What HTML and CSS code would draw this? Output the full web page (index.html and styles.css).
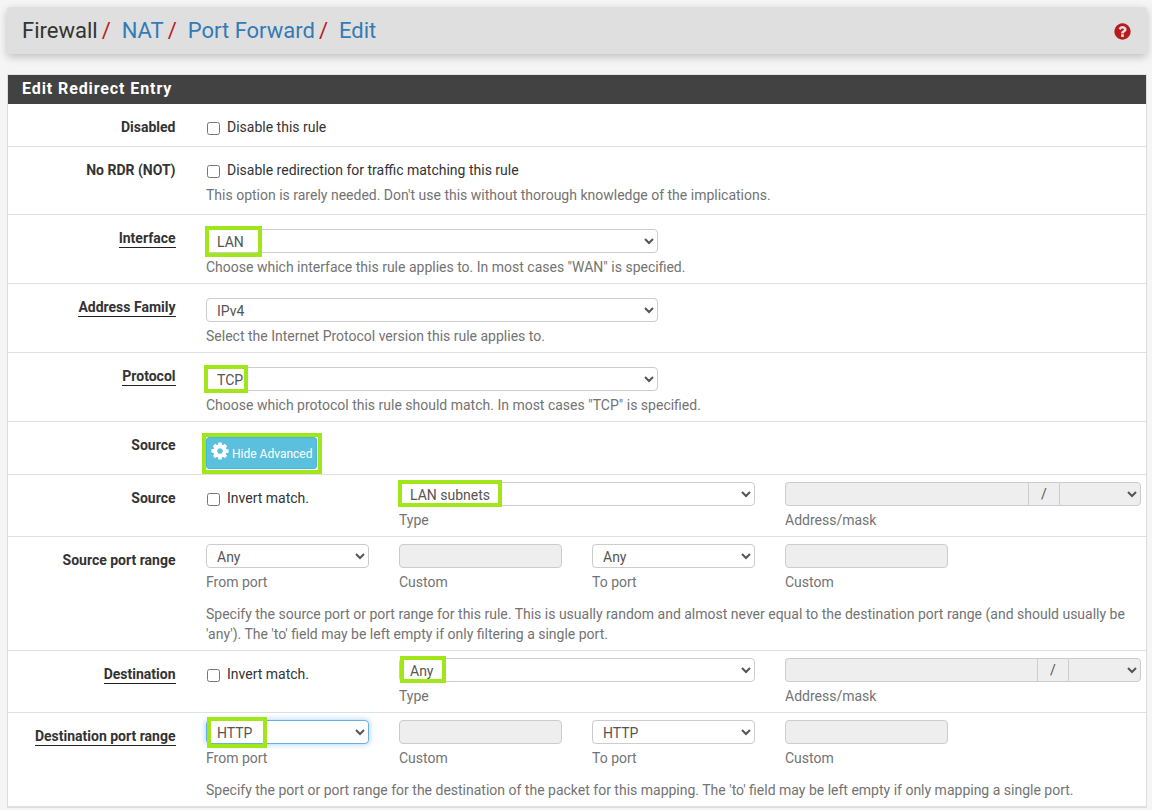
FILE: index.html

```html
<!DOCTYPE html>
<html lang="en">
<head>
<meta charset="UTF-8">
<meta name="viewport" content="width=device-width, initial-scale=1.0">
<title>Firewall: NAT: Port Forward: Edit</title>
<link rel="stylesheet" href="styles.css">
</head>
<body>

<header class="crumbs">
  <h1>
    <span>Firewall</span><i>/</i>
    <a href="#">NAT</a><i>/</i>
    <a href="#">Port Forward</a><i>/</i>
    <a href="#">Edit</a>
  </h1>
  <a href="#" class="help-link">
    <svg viewBox="0 0 1792 1792" width="19" height="19"><path d="M1024 1376v-192q0-14-9-23t-23-9h-192q-14 0-23 9t-9 23v192q0 14 9 23t23 9h192q14 0 23-9t9-23zm256-672q0-88-55.5-163t-138.5-116-170-41q-243 0-371 213-15 24 8 42l132 100q7 6 19 6 16 0 25-12 53-68 86-92 34-24 86-24 48 0 85.5 26t37.5 59q0 38-20 61t-68 45q-63 28-115.5 86.5t-52.5 125.5v36q0 14 9 23t23 9h192q14 0 23-9t9-23q0-19 21.5-49.5t54.5-49.5q32-18 49-28.5t46-35 44.5-48 28-60.5 12.5-81zm384 192q0 209-103 385.5t-279.5 279.5-385.5 103-385.5-103-279.5-279.5-103-385.5 103-385.5 279.5-279.5 385.5-103 385.5 103 279.5 279.5 103 385.5z"/></svg>
  </a>
</header>

<form class="panel">
  <h2>Edit Redirect Entry</h2>

  <!-- Basic options -->
  <div class="row row-disabled">
    <div class="row-label">Disabled</div>
    <div class="row-body">
      <label class="check"><input type="checkbox"> Disable this rule</label>
    </div>
  </div>

  <div class="row row-nordr">
    <div class="row-label">No RDR (NOT)</div>
    <div class="row-body">
      <label class="check"><input type="checkbox"> Disable redirection for traffic matching this rule</label>
      <p class="help help-check">This option is rarely needed. Don't use this without thorough knowledge of the implications.</p>
    </div>
  </div>

  <div class="row row-select">
    <div class="row-label"><u>Interface</u></div>
    <div class="row-body">
      <div class="mark-wrap wide">
        <select><option>LAN</option></select>
        <span class="mark mark-interface"></span>
      </div>
      <p class="help">Choose which interface this rule applies to. In most cases "WAN" is specified.</p>
    </div>
  </div>

  <div class="row row-select">
    <div class="row-label"><u>Address Family</u></div>
    <div class="row-body">
      <div class="mark-wrap wide">
        <select><option>IPv4</option></select>
      </div>
      <p class="help">Select the Internet Protocol version this rule applies to.</p>
    </div>
  </div>

  <div class="row row-select">
    <div class="row-label"><u>Protocol</u></div>
    <div class="row-body">
      <div class="mark-wrap wide">
        <select><option>TCP</option></select>
        <span class="mark mark-protocol"></span>
      </div>
      <p class="help">Choose which protocol this rule should match. In most cases "TCP" is specified.</p>
    </div>
  </div>

  <div class="row row-button">
    <div class="row-label">Source</div>
    <div class="row-body">
      <div class="mark-wrap btn-wrap">
        <button type="button" class="btn-info">
          <svg viewBox="0 0 1792 1792" width="20" height="20"><path d="M1152 896q0-106-75-181t-181-75-181 75-75 181 75 181 181 75 181-75 75-181zm512-109v222q0 12-8 23t-20 13l-185 28q-19 54-39 91 35 50 107 138 10 12 10 25t-9 23q-27 37-99 108t-94 71q-12 0-26-9l-138-108q-44 23-91 38-16 136-29 186-7 28-36 28h-222q-14 0-24.5-8.5t-11.5-21.5l-28-184q-49-16-90-37l-141 107q-10 9-25 9-14 0-25-11-126-114-165-168-7-10-7-23 0-12 8-23 15-21 51-66.5t54-70.5q-27-50-41-99l-183-27q-13-2-21-12.5t-8-23.5v-222q0-12 8-23t19-13l186-28q14-46 39-92-40-57-107-138-10-12-10-24 0-10 9-23 26-36 98.5-107.5t94.5-71.5q13 0 26 10l138 107q44-23 91-38 16-136 29-186 7-28 36-28h222q14 0 24.5 8.5t11.5 21.5l28 184q49 16 90 37l142-107q9-9 24-9 13 0 25 10 129 119 165 170 7 8 7 22 0 12-8 23-15 21-51 66.5t-54 70.5q26 50 41 98l183 28q13 2 21 12.5t8 23.5z"/></svg>
          <span>Hide Advanced</span>
        </button>
        <span class="mark mark-advanced"></span>
      </div>
    </div>
  </div>

  <!-- Source -->
  <div class="row row-fields">
    <div class="row-label label-check">Source</div>
    <div class="row-body fields">
      <label class="check field-check"><input type="checkbox"> Invert match.</label>
      <div class="field span2">
        <div class="mark-wrap">
          <select><option>LAN subnets</option></select>
          <span class="mark mark-lan"></span>
        </div>
        <span class="caption">Type</span>
      </div>
      <div class="field span2">
        <div class="addr">
          <input type="text" disabled>
          <span class="addr-slash">/</span>
          <select class="mask"><option></option></select>
        </div>
        <span class="caption">Address/mask</span>
      </div>
    </div>
  </div>

  <div class="row row-ports">
    <div class="row-label">Source port range</div>
    <div class="row-body">
      <div class="fields">
        <div class="field"><select><option>Any</option></select><span class="caption">From port</span></div>
        <div class="field"><input type="text" disabled><span class="caption">Custom</span></div>
        <div class="field"><select><option>Any</option></select><span class="caption">To port</span></div>
        <div class="field"><input type="text" disabled><span class="caption">Custom</span></div>
      </div>
      <p class="help help-ports">Specify the source port or port range for this rule. This is usually random and almost never equal to the destination port range (and should usually be 'any'). The 'to' field may be left empty if only filtering a single port.</p>
    </div>
  </div>

  <!-- Destination -->
  <div class="row row-fields">
    <div class="row-label label-check"><u>Destination</u></div>
    <div class="row-body fields">
      <label class="check field-check"><input type="checkbox"> Invert match.</label>
      <div class="field span2">
        <div class="mark-wrap">
          <select><option>Any</option></select>
          <span class="mark mark-any"></span>
        </div>
        <span class="caption">Type</span>
      </div>
      <div class="field span2">
        <div class="addr">
          <input type="text" disabled>
          <span class="addr-slash">/</span>
          <select class="mask mask-dest"><option></option></select>
        </div>
        <span class="caption">Address/mask</span>
      </div>
    </div>
  </div>

  <div class="row row-ports">
    <div class="row-label"><u>Destination port range</u></div>
    <div class="row-body">
      <div class="fields">
        <div class="field">
          <div class="mark-wrap">
            <select class="focused"><option>HTTP</option></select>
            <span class="mark mark-http"></span>
          </div>
          <span class="caption">From port</span>
        </div>
        <div class="field"><input type="text" disabled><span class="caption">Custom</span></div>
        <div class="field"><select><option>HTTP</option></select><span class="caption">To port</span></div>
        <div class="field"><input type="text" disabled><span class="caption">Custom</span></div>
      </div>
      <p class="help help-ports">Specify the port or port range for the destination of the packet for this mapping. The 'to' field may be left empty if only mapping a single port.</p>
    </div>
  </div>
</form>

</body>
</html>
```

FILE: styles.css

```css
* {
  box-sizing: border-box;
}
html, body {
  height: 810px;
  overflow: hidden;
}
body {
  margin: 0;
  padding: 7px 5px 0 7px;
  background-color: #f5f5f5;
  font-family: Roboto, "Liberation Sans", sans-serif;
  font-size: 14px;
  line-height: 20px;
  color: #333;
}

/* Breadcrumb bar */
.crumbs {
  height: 47px;
  display: flex;
  justify-content: space-between;
  align-items: center;
  padding: 0 15px;
  background-color: #dfdfdf;
  border-radius: 3px;
  box-shadow: 0 3px 8px rgba(0, 0, 0, 0.22);
}
.crumbs h1 {
  margin: 0;
  font-size: 22px;
  font-weight: 400;
  line-height: 46px;
  color: #333;
}
.crumbs h1 a {
  color: #337ab7;
  text-decoration: none;
  margin-left: 3.5px;
}
.crumbs h1 i {
  font-style: normal;
  color: #b71c1c;
  margin-left: 4px;
  margin-right: 2px;
}
.help-link {
  display: flex;
  margin-top: 2px;
  fill: #b71c1c;
}

/* Panel */
.panel {
  margin-top: 20px;
  background-color: #fff;
  border: 1px solid #ddd;
  border-top-color: #e4e4e4;
}
.panel h2 {
  margin: 0;
  height: 29px;
  padding-left: 14px;
  background-color: #424242;
  color: #fff;
  font-size: 16px;
  font-weight: 700;
  letter-spacing: 0.9px;
  line-height: 28px;
}

/* Rows */
.row {
  display: grid;
  grid-template-columns: 167.5px 1fr;
  column-gap: 30.5px;
  border-bottom: 1px solid #e0e0e0;
}
.row-label {
  text-align: right;
  font-weight: 700;
  color: #333;
}
.row-label u {
  text-decoration: none;
  border-bottom: 1px solid #222;
  padding-bottom: 1px;
}
.row-disabled {
  height: 43px;
  padding-top: 13px;
}
.row-nordr {
  height: 68px;
  padding-top: 13px;
}
.row-select {
  height: 69px;
  padding-top: 14px;
}
.row-select .row-label {
  margin-top: -1px;
}
.row-button {
  height: 53px;
  padding-top: 14px;
}
.row-button .row-label {
  margin-top: -1px;
}
.row-fields {
  height: 62px;
  padding-top: 7px;
}
.row-ports {
  padding-top: 7px;
}
.label-check {
  padding-top: 6px;
}
.row-ports .row-label {
  padding-top: 6px;
}

.check {
  display: flex;
  align-items: center;
  gap: 7px;
}
.check input {
  width: 13px;
  height: 13px;
  margin: 2px 0 0 1px;
}
.field-check {
  align-self: start;
  padding-top: 6px;
}

.help {
  margin: 4px 0 0;
  color: #737373;
}
.help-check {
  margin-top: 5px;
}
.help-ports {
  margin: 12px 0 6px;
}

/* Controls */
select, input[type="text"] {
  display: block;
  width: 100%;
  height: 24px;
  padding: 1px 5px 0 6px;
  font-family: inherit;
  font-size: 14px;
  color: #555;
  background-color: #fff;
  border: 1px solid #ccc;
  border-radius: 4px;
}
input[type="text"]:disabled, select.mask {
  background-color: #eee;
}
.focused {
  border-color: #66afe9;
  box-shadow: 0 0 6px rgba(102, 175, 233, 0.6);
}

.fields {
  display: grid;
  grid-template-columns: repeat(5, 163px);
  column-gap: 30px;
}
.span2 {
  grid-column: span 2;
}
.caption {
  display: block;
  margin-top: 4px;
  color: #737373;
}

.addr {
  display: flex;
}
.addr input {
  flex: 1;
  min-width: 0;
  border-radius: 4px 0 0 4px;
  border-right: 0;
}
.addr select {
  width: 82px;
  border-radius: 0 4px 4px 0;
}
.addr select.mask-dest {
  width: 73px;
}
.addr-slash {
  width: 31px;
  height: 24px;
  text-align: center;
  line-height: 22px;
  color: #555;
  background-color: #eee;
  border: 1px solid #ccc;
  border-right: 0;
}

.btn-wrap {
  width: 111px;
  margin-top: 1px;
}
.btn-info {
  display: flex;
  align-items: center;
  width: 111px;
  height: 32px;
  padding: 0 0 0 3px;
  gap: 2px;
  background-color: #5bc0de;
  color: #fff;
  fill: #fff;
  border: 1px solid #46b8da;
  border-radius: 3px;
  font-family: inherit;
  font-size: 12px;
  white-space: nowrap;
}
.btn-info svg {
  margin-bottom: 4px;
}
.btn-info span {
  margin-top: 2px;
}

/* Green highlights drawn over the screenshot */
.mark-wrap {
  position: relative;
}
.wide {
  width: 452px;
}
.mark {
  position: absolute;
  border: 4px solid #a0e619;
  pointer-events: none;
}
.mark-interface {
  left: -1px;
  top: -3px;
  width: 57px;
  height: 31px;
}
.mark-protocol {
  left: -2px;
  top: -2px;
  width: 44px;
  height: 28px;
}
.mark-advanced {
  left: -4px;
  top: -4px;
  width: 120px;
  height: 41px;
}
.mark-lan {
  left: -1px;
  top: -2px;
  width: 104px;
  height: 27px;
}
.mark-any {
  left: 1px;
  top: -2px;
  width: 46px;
  height: 27px;
}
.mark-http {
  left: 1px;
  top: -3px;
  width: 60px;
  height: 31px;
}
```
